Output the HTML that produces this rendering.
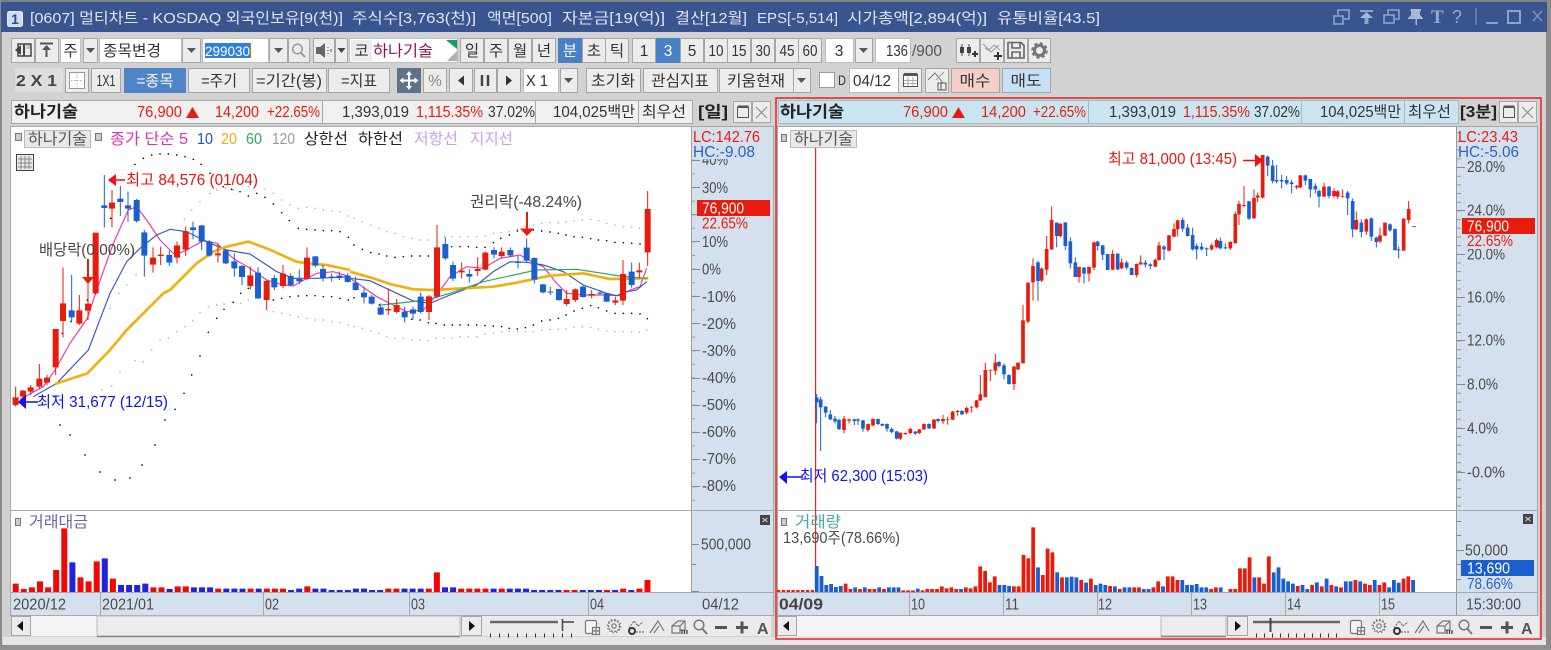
<!DOCTYPE html>
<html lang="ko"><head><meta charset="utf-8"><title>멀티차트</title>
<style>
html,body{margin:0;padding:0;background:#d2d2d2;width:1551px;height:650px;overflow:hidden}
svg{display:block}
text{font-family:"Liberation Sans","Noto Sans CJK KR",sans-serif;font-size:15.5px;fill:#333;white-space:pre}
.c{text-anchor:middle}
.b{fill:#ececec;stroke:#a6a6a6}
.w{fill:#fff;stroke:#bdbdbd}
.r{fill:#e81c0c}
.u{fill:#2a62c8}
.k{fill:#4a4a4a}
.cap{fill:#dfe4f0;font-size:15px}
.hd{fill:#f0f0f0;stroke:#a8a8a8}
.hb{fill:#c9e5f2;stroke:#a8b8c0}
</style></head><body>
<svg width="1551" height="650" viewBox="0 0 1551 650" xmlns="http://www.w3.org/2000/svg">
<defs>
<g id="ic" fill="none" stroke="#777" stroke-width="1.2">
<rect x="585.5" y="620.5" width="11" height="13" rx="1.5" fill="#f4f4f4"/><rect x="592.5" y="627.5" width="7" height="7" fill="#f4f4f4"/><path d="M592.5 631H599.5M596 627.5V634.5"/>
<circle cx="614" cy="626" r="5.5" stroke-dasharray="2 1.2"/><circle cx="614" cy="626" r="6.7" stroke-dasharray="1.5 2"/><circle cx="614" cy="626" r="2.2"/>
<path d="M629 628L634 621L638 626L643 622" stroke-dasharray="2 1"/><circle cx="632" cy="631" r="3" stroke="#333" stroke-width="2"/><path d="M636 632H644" stroke-dasharray="2 1"/>
<path d="M650 633L658 621L664 631M654 633L659 626"/>
<path d="M672 626L678 621H685V630H680M672 626H680V633H672ZM680 626L685 621"/><path d="M682 634V630M684.5 634V630M687 634V630" stroke="#333"/>
<circle cx="699" cy="625" r="4.8" stroke-width="1.5"/><path d="M702.5 629L707 634" stroke-width="2"/>
<path d="M715 627.5H727" stroke-width="3" stroke="#555"/><path d="M736 627.5H748M742 621.5V633.5" stroke-width="3" stroke="#555"/>
</g>
</defs>
<!-- window -->
<rect width="1551" height="650" fill="#d2d2d2"/>
<rect x="0" y="0" width="1551" height="2" fill="#808080"/>
<rect x="0" y="0" width="2" height="650" fill="#8a8a8a"/>
<rect x="1546" y="0" width="5" height="650" fill="#8a8a8a"/>
<rect x="1" y="2" width="1546" height="30" fill="#385590"/>
<rect x="0" y="645" width="1551" height="5" fill="#909090"/>
<rect x="3" y="637" width="1543" height="8" fill="#e6e6e6"/>
<rect x="7.5" y="11.5" width="15" height="15" rx="2" fill="#cfdcf0" stroke="#e8eef8"/>
<text x="15" y="24" class="c" style="fill:#2f4c88;font-weight:bold;font-size:14px">1</text>
<text x="30" y="23" class="cap" textLength="313" lengthAdjust="spacingAndGlyphs">[0607] 멀티차트 - KOSDAQ 외국인보유[9(천)]</text>
<text x="352" y="23" class="cap" textLength="124" lengthAdjust="spacingAndGlyphs">주식수[3,763(천)]</text>
<text x="487" y="23" class="cap" textLength="65" lengthAdjust="spacingAndGlyphs">액면[500]</text>
<text x="562" y="23" class="cap" textLength="103" lengthAdjust="spacingAndGlyphs">자본금[19(억)]</text>
<text x="675" y="23" class="cap" textLength="72" lengthAdjust="spacingAndGlyphs">결산[12월]</text>
<text x="757" y="23" class="cap" textLength="81" lengthAdjust="spacingAndGlyphs">EPS[-5,514]</text>
<text x="847" y="23" class="cap" textLength="140" lengthAdjust="spacingAndGlyphs">시가총액[2,894(억)]</text>
<text x="997" y="23" class="cap" textLength="103" lengthAdjust="spacingAndGlyphs">유통비율[43.5]</text>
<!-- title icons -->
<g fill="none" stroke="#8fa3c8" stroke-width="1.6">
<rect x="1334" y="16" width="9" height="8"/><path d="M1338 15V10H1349V19H1344"/>
<path d="M1360 11H1373" stroke-width="2"/><path d="M1366.5 24V16" stroke-width="4"/>
<rect x="1384" y="15" width="10" height="8"/><path d="M1388 14V10H1399V19H1395"/>
<path d="M1486 23H1498" stroke-width="2"/><rect x="1508" y="11" width="12" height="12" stroke-width="2"/><path d="M1533 11L1542 21M1542 11L1533 21" stroke="#7a8eb6"/>
<path d="M1476 8V25" stroke-width="1"/>
</g>
<path d="M1360 18L1366.5 12L1373 18Z" fill="#a8b8d6"/>
<path d="M1411 9H1421V11H1420V15L1423 18V19H1417V25H1415.5V19H1408V18L1411 15V11H1410Z" fill="#a8b8d6"/>
<text x="1431" y="23" style="font-family:'Liberation Serif',serif;font-size:19px;font-weight:bold;fill:#98aace">T</text>
<text x="1452" y="23" style="font-size:18px;fill:#98aace">?</text>

<!-- toolbar row1 -->
<rect class="b" x="11.5" y="38.5" width="23" height="24"/>
<path d="M18 44H31V56H18Z" fill="none" stroke="#444" stroke-width="1.5"/><path d="M24 44V56" stroke="#444" stroke-width="2"/><path d="M15 50L21 45V55Z" fill="#444"/><path d="M26 46H30M26 48H30" stroke="#999"/>
<rect class="b" x="35.5" y="38.5" width="23" height="24"/>
<path d="M40 43.5H53M46.5 57V48" stroke="#555" stroke-width="2"/><path d="M42 50L46.5 45L51 50Z" fill="#555"/>
<rect class="w" x="60.5" y="38.5" width="20" height="24"/><text x="70.5" y="56" class="c">주</text>
<rect class="b" x="83.5" y="38.5" width="14" height="24"/><path d="M86 48H95L90.5 53Z" fill="#555"/>
<rect class="w" x="99.5" y="38.5" width="82" height="24"/><text x="103" y="56" textLength="58" lengthAdjust="spacingAndGlyphs">종목변경</text>
<rect class="b" x="182.5" y="38.5" width="18" height="24"/><path d="M187 48H196L191.5 53Z" fill="#555"/>
<rect class="w" x="202.5" y="38.5" width="66" height="24"/><rect x="205" y="43" width="45" height="15" fill="#2f80d8"/>
<text x="205" y="56" textLength="45" lengthAdjust="spacingAndGlyphs" style="fill:#fff;font-size:14px">299030</text><path d="M250.5 43V58" stroke="#e06a10"/>
<rect class="b" x="269.5" y="38.5" width="18" height="24"/><path d="M274 48H283L278.5 53Z" fill="#555"/>
<rect class="b" x="288.5" y="38.5" width="21" height="24"/><circle cx="297.5" cy="49" r="4.8" fill="none" stroke="#999" stroke-width="1.5"/><path d="M301 53L305 57" stroke="#999" stroke-width="2"/>
<rect class="b" x="313.5" y="38.5" width="21" height="24"/><path d="M316 47H320L325 43V58L320 54H316Z" fill="#666"/><path d="M328 47V48M328 50V51M328 53V54M331 49V52" stroke="#888" stroke-width="1.5"/>
<rect class="b" x="335.5" y="38.5" width="12" height="24"/><path d="M337.5 48H345.5L341.5 53Z" fill="#444"/>
<rect class="w" x="349.5" y="38.5" width="108" height="24"/><rect x="351" y="40" width="21" height="21" fill="#ececec"/>
<text x="361.5" y="56" class="c">코</text>
<text x="373" y="56" textLength="60" lengthAdjust="spacingAndGlyphs" style="fill:#8e1458">하나기술</text>
<path d="M446 40H457V49Z" fill="#12a060"/><path d="M457 51V61H447Z" fill="#b0b0b0"/>
<rect class="b" x="460.5" y="38.5" width="23" height="24"/><text x="472" y="56" class="c">일</text>
<rect class="b" x="484.5" y="38.5" width="23" height="24"/><text x="496" y="56" class="c">주</text>
<rect class="b" x="508.5" y="38.5" width="23" height="24"/><text x="520" y="56" class="c">월</text>
<rect class="b" x="532.5" y="38.5" width="23" height="24"/><text x="544" y="56" class="c">년</text>
<rect x="558" y="38" width="24" height="25" fill="#4a80c4"/><text x="570" y="56" class="c" style="fill:#fff">분</text>
<rect class="b" x="582.5" y="38.5" width="23" height="24"/><text x="594" y="56" class="c">초</text>
<rect class="b" x="605.5" y="38.5" width="23" height="24"/><text x="617" y="56" class="c">틱</text>
<rect class="b" x="632.5" y="38.5" width="23" height="24"/><text x="644" y="56" class="c">1</text>
<rect x="656" y="38" width="24" height="25" fill="#4a80c4"/><text x="668" y="56" class="c" style="fill:#fff">3</text>
<rect class="b" x="680.5" y="38.5" width="23" height="24"/><text x="692" y="56" class="c">5</text>
<rect class="b" x="704.5" y="38.5" width="23" height="24"/><text x="716" y="56" class="c" textLength="15" lengthAdjust="spacingAndGlyphs">10</text>
<rect class="b" x="727.5" y="38.5" width="23" height="24"/><text x="739" y="56" class="c" textLength="15" lengthAdjust="spacingAndGlyphs">15</text>
<rect class="b" x="751.5" y="38.5" width="23" height="24"/><text x="763" y="56" class="c" textLength="15" lengthAdjust="spacingAndGlyphs">30</text>
<rect class="b" x="775.5" y="38.5" width="23" height="24"/><text x="787" y="56" class="c" textLength="15" lengthAdjust="spacingAndGlyphs">45</text>
<rect class="b" x="798.5" y="38.5" width="23" height="24"/><text x="810" y="56" class="c" textLength="15" lengthAdjust="spacingAndGlyphs">60</text>
<rect class="w" x="825.5" y="38.5" width="28" height="24"/><text x="839" y="56" class="c">3</text>
<rect class="b" x="855.5" y="38.5" width="17" height="24"/><path d="M859 48H868L863.5 53Z" fill="#555"/>
<rect class="w" x="875.5" y="38.5" width="35" height="24"/><text x="886" y="56" textLength="22" lengthAdjust="spacingAndGlyphs">136</text>
<text x="912" y="56" textLength="30" lengthAdjust="spacingAndGlyphs" style="fill:#555">/900</text>
<rect class="b" x="956.5" y="38.5" width="23" height="24"/><path d="M962 44V56M969 44V56" stroke="#444"/><path d="M962 47V53M969 47V53" stroke="#444" stroke-width="4"/><path d="M972 54H978M975 51V57" stroke="#333" stroke-width="2"/>
<rect class="b" x="980.5" y="38.5" width="23" height="24"/><path d="M983 44L989 50L994 45L1000 50M985 48L991 52L999 45" stroke="#999" fill="none"/><path d="M994 56H1002M998 52V60" stroke="#333" stroke-width="2"/>
<rect class="b" x="1004.5" y="38.5" width="23" height="24"/><path d="M1008 42.5H1021L1024 45.5V58H1008ZM1012 43V48H1020V43M1012 58V52H1020V58" fill="none" stroke="#666" stroke-width="1.6"/>
<rect class="b" x="1028.5" y="38.5" width="22" height="24"/><circle cx="1039.5" cy="50.5" r="5" fill="none" stroke="#777" stroke-width="3"/><circle cx="1039.5" cy="50.5" r="7" fill="none" stroke="#777" stroke-width="2.5" stroke-dasharray="3 2.5"/>

<!-- toolbar row2 -->
<rect x="15" y="68" width="48" height="24" fill="#dedede"/>
<text x="16" y="86" textLength="41" lengthAdjust="spacingAndGlyphs" style="font-weight:bold;fill:#444">2 X 1</text>
<rect class="b" x="65.5" y="68.5" width="23" height="24"/><rect x="69.5" y="72.5" width="15" height="16" fill="#fff" stroke="#999"/><path d="M77 74V87M71 80.5H83" stroke="#aaa" stroke-dasharray="1.5 1.5"/>
<rect class="b" x="91.5" y="68.5" width="29" height="24"/><text x="106" y="86" class="c" textLength="19" lengthAdjust="spacingAndGlyphs">1X1</text>
<rect x="124" y="68" width="62" height="25" fill="#4f84c6"/><text x="155" y="86" class="c" textLength="37" lengthAdjust="spacingAndGlyphs" style="fill:#fff">=종목</text>
<rect class="b" x="188.5" y="68.5" width="61" height="24"/><text x="219" y="86" class="c" textLength="36" lengthAdjust="spacingAndGlyphs">=주기</text>
<rect class="b" x="252.5" y="68.5" width="74" height="24"/><text x="289" y="86" class="c" textLength="66" lengthAdjust="spacingAndGlyphs">=기간(봉)</text>
<rect class="b" x="328.5" y="68.5" width="61" height="24"/><text x="359" y="86" class="c" textLength="36" lengthAdjust="spacingAndGlyphs">=지표</text>
<rect x="397" y="68" width="24" height="25" fill="#5f7287"/><path d="M401 80.5H417M409 72.5V88.5" stroke="#fff" stroke-width="2"/><path d="M409 71L406 75H412ZM409 90L406 86H412ZM399.5 80.5L403.5 77.5V83.5ZM418.5 80.5L414.5 77.5V83.5Z" fill="#fff"/>
<rect class="b" x="423.5" y="68.5" width="23" height="24"/><text x="435" y="86" class="c" style="fill:#888">%</text>
<rect class="b" x="449.5" y="68.5" width="23" height="24"/><path d="M464 75.5V85.5L458 80.5Z" fill="#333"/>
<rect class="b" x="474.5" y="68.5" width="22" height="24"/><path d="M482 75V86M488 75V86" stroke="#444" stroke-width="2.5"/>
<rect class="b" x="497.5" y="68.5" width="23" height="24"/><path d="M506 75.5V85.5L512 80.5Z" fill="#333"/>
<rect class="w" x="523.5" y="68.5" width="35" height="24"/><text x="526" y="86" textLength="22" lengthAdjust="spacingAndGlyphs">X 1</text>
<rect class="b" x="560.5" y="68.5" width="17" height="24"/><path d="M564 78H573L568.5 83Z" fill="#555"/>
<rect class="b" x="586.5" y="68.5" width="54" height="24"/><text x="613" y="86" class="c" textLength="44" lengthAdjust="spacingAndGlyphs">초기화</text>
<rect class="b" x="643.5" y="68.5" width="74" height="24"/><text x="680" y="86" class="c" textLength="58" lengthAdjust="spacingAndGlyphs">관심지표</text>
<rect class="b" x="719.5" y="68.5" width="74" height="24"/><text x="756" y="86" class="c" textLength="58" lengthAdjust="spacingAndGlyphs">키움현재</text>
<rect class="b" x="793.5" y="68.5" width="17" height="24"/><path d="M797 78H806L801.5 83Z" fill="#555"/>
<rect x="819.5" y="72.5" width="15" height="15" fill="#fff" stroke="#999"/>
<text x="838" y="85" textLength="8" lengthAdjust="spacingAndGlyphs" style="font-size:14px">D</text>
<rect class="w" x="849.5" y="68.5" width="49" height="24"/><text x="853" y="86" textLength="38" lengthAdjust="spacingAndGlyphs">04/12</text>
<rect class="b" x="898.5" y="68.5" width="23" height="24"/><rect x="903.5" y="74.5" width="14" height="12" fill="#fff" stroke="#555"/><path d="M904 74.5H917" stroke="#555" stroke-width="3"/><path d="M904 80.5H917M904 83.5H917M908 77V86M913 77V86" stroke="#aaa"/>
<rect class="b" x="925.5" y="68.5" width="23" height="24"/><path d="M928 80L935 73L943 83" stroke="#777" fill="none"/><path d="M936 80L944 72" stroke="#999"/><path d="M938 83H946V90H938ZM941 83V90" stroke="#555" fill="none"/>
<rect x="951.5" y="68.5" width="48" height="24" fill="#f6cfc8" stroke="#a6a6a6"/><text x="975" y="86" class="c" textLength="31" lengthAdjust="spacingAndGlyphs">매수</text>
<rect x="1002.5" y="68.5" width="48" height="24" fill="#c8e0f6" stroke="#a6a6a6"/><text x="1026" y="86" class="c" textLength="31" lengthAdjust="spacingAndGlyphs">매도</text>

<!-- left header -->
<rect class="hd" x="11.5" y="100.5" width="311" height="23"/>
<rect class="hd" x="322.5" y="100.5" width="213" height="23"/>
<rect class="hd" x="535.5" y="100.5" width="103" height="23"/>
<rect class="hd" x="638.5" y="100.5" width="54" height="23"/>
<text x="14" y="117" textLength="64" lengthAdjust="spacingAndGlyphs" style="font-weight:bold;font-size:16px;fill:#222">하나기술</text>
<text x="137" y="117" textLength="45" lengthAdjust="spacingAndGlyphs" class="r">76,900</text><path d="M186 118L192.5 107L199 118Z" fill="#e81c0c"/>
<text x="215" y="117" textLength="44" lengthAdjust="spacingAndGlyphs" class="r">14,200</text><text x="267" y="117" textLength="53" lengthAdjust="spacingAndGlyphs" class="r">+22.65%</text>
<text x="342" y="117" textLength="67" lengthAdjust="spacingAndGlyphs">1,393,019</text><text x="416" y="117" textLength="67" lengthAdjust="spacingAndGlyphs" class="r">1,115.35%</text><text x="488" y="117" textLength="47" lengthAdjust="spacingAndGlyphs">37.02%</text>
<text x="553" y="117" textLength="82" lengthAdjust="spacingAndGlyphs">104,025백만</text><text x="642" y="117" textLength="44" lengthAdjust="spacingAndGlyphs">최우선</text>
<text x="698" y="117" textLength="30" lengthAdjust="spacingAndGlyphs" style="font-weight:bold;fill:#222">[일]</text>
<rect class="b" x="733.5" y="101.5" width="18" height="21"/><rect x="737.5" y="107.5" width="11" height="10" fill="none" stroke="#555"/><path d="M737.5 106.5H748.5" stroke="#555" stroke-width="2"/>
<rect class="b" x="752.5" y="101.5" width="18" height="21"/><path d="M756 107L767 118M767 107L756 118" stroke="#888"/>

<!-- left chart -->
<rect x="10.5" y="126.5" width="763" height="489" fill="#fff" stroke="#a8a8a8"/>
<rect x="692" y="127" width="81" height="488" fill="#d5e0ee"/>
<path d="M691.5 127V615" stroke="#a0a0a0"/>
<rect x="11" y="593" width="681" height="22" fill="#d5e0ee"/>
<path d="M11 510.5H773M11 592.5H773M100.5 593V615M263.5 593V615M409.5 593V615M588.5 593V615" stroke="#a8a8a8"/>
<path d="M693.5 132.6V508" stroke="#999" stroke-width="3" stroke-dasharray="1 12.6" fill="none"/>
<path d="M692 160.5H700M692 187.5H700M692 214.5H700M692 241.5H700M692 269.5H700M692 296.5H700M692 323.5H700M692 350.5H700M692 378.5H700M692 405.5H700M692 432.5H700M692 459.5H700M692 486.5H700" stroke="#888"/>
<text x="702" y="165" textLength="26" lengthAdjust="spacingAndGlyphs" class="k">40%</text><text x="702" y="193" textLength="26" lengthAdjust="spacingAndGlyphs" class="k">30%</text><text x="702" y="247" textLength="26" lengthAdjust="spacingAndGlyphs" class="k">10%</text><text x="702" y="274.5" textLength="19" lengthAdjust="spacingAndGlyphs" class="k">0%</text>
<text x="702" y="302" textLength="34" lengthAdjust="spacingAndGlyphs" class="k">-10%</text><text x="702" y="329" textLength="34" lengthAdjust="spacingAndGlyphs" class="k">-20%</text><text x="702" y="356" textLength="34" lengthAdjust="spacingAndGlyphs" class="k">-30%</text><text x="702" y="383" textLength="34" lengthAdjust="spacingAndGlyphs" class="k">-40%</text><text x="702" y="410" textLength="34" lengthAdjust="spacingAndGlyphs" class="k">-50%</text><text x="702" y="437" textLength="34" lengthAdjust="spacingAndGlyphs" class="k">-60%</text><text x="702" y="464" textLength="34" lengthAdjust="spacingAndGlyphs" class="k">-70%</text><text x="702" y="491" textLength="34" lengthAdjust="spacingAndGlyphs" class="k">-80%</text>
<rect x="692" y="128" width="80" height="31" fill="#d5e0ee"/>
<path d="M692 160.5H700" stroke="#888"/>
<text x="693" y="142" textLength="67" lengthAdjust="spacingAndGlyphs" class="r">LC:142.76</text><text x="693" y="157" textLength="62" lengthAdjust="spacingAndGlyphs" class="u">HC:-9.08</text>
<rect x="700" y="216" width="70" height="16" fill="#d5e0ee"/>
<text x="702" y="228.5" textLength="46" lengthAdjust="spacingAndGlyphs" class="r">22.65%</text>
<rect x="697" y="200" width="73" height="16" fill="#e81c0c"/><text x="702" y="213.5" textLength="42" lengthAdjust="spacingAndGlyphs" style="fill:#fff">76,900</text>

<rect x="15.5" y="133.5" width="6" height="7" fill="#ccc" stroke="#777"/>
<rect x="24.5" y="130.5" width="66" height="17" fill="#e8e8e8" stroke="#bbb"/><text x="28" y="144" textLength="59" lengthAdjust="spacingAndGlyphs" style="fill:#555">하나기술</text>
<rect x="95.5" y="133.5" width="6" height="7" fill="#ccc" stroke="#777"/>
<text x="110" y="144" textLength="78" lengthAdjust="spacingAndGlyphs" style="fill:#e030b0">종가 단순 5</text>
<text x="197" y="144" textLength="16" lengthAdjust="spacingAndGlyphs" style="fill:#2050c0">10</text><text x="221" y="144" textLength="16" lengthAdjust="spacingAndGlyphs" style="fill:#f0a818">20</text><text x="246" y="144" textLength="16" lengthAdjust="spacingAndGlyphs" style="fill:#30a860">60</text><text x="272" y="144" textLength="23" lengthAdjust="spacingAndGlyphs" style="fill:#999">120</text>
<text x="304" y="144" textLength="44" lengthAdjust="spacingAndGlyphs" style="fill:#222">상한선</text><text x="358" y="144" textLength="45" lengthAdjust="spacingAndGlyphs" style="fill:#222">하한선</text><text x="414" y="144" textLength="44" lengthAdjust="spacingAndGlyphs" style="fill:#c8a0f0">저항선</text><text x="470" y="144" textLength="43" lengthAdjust="spacingAndGlyphs" style="fill:#c8a0f0">지지선</text>
<rect x="16.5" y="154.5" width="17" height="16" fill="#e8e8e8" stroke="#444"/><path d="M18 159H32M18 163H32M18 167H32M21 156V169M25 156V169M29 156V169" stroke="#888"/>

<!-- left chart lines and candles -->
<g transform="translate(0,130) scale(.33333)" fill="none">
<path stroke="#c8a0f0" stroke-width="5" stroke-linecap="round" d="M305 780h.1M335 768h.1M360 725h.1M405 692h.1M430 695h.1M455 660h.1M480 630h.1M505 625h.1M530 605h.1M555 590h.1M578 572h.1M600 548h.1M625 530h.1M650 525h.1M672 522h.1M697 517h.1M722 520h.1M745 510h.1M820 545h.1M845 550h.1M870 555h.1M895 560h.1M920 565h.1M945 570h.1M970 570h.1M995 575h.1M1020 578h.1M1045 585h.1M330 535h.1M357 490h.1M380 465h.1M408 435h.1M553 268h.1M575 240h.1M600 215h.1M630 190h.1M650 180h.1M675 175h.1M700 180h.1M745 170h.1M795 178h.1M820 190h.1M845 210h.1M870 225h.1M895 235h.1M920 232h.1M945 235h.1M970 240h.1M995 243h.1M1020 245h.1M1045 258h.1"/>
<path stroke="#111" stroke-width="5" stroke-linecap="round" d="M405 103h.1M430 85h.1M455 75h.1M480 72h.1M505 72h.1M530 75h.1M555 80h.1M580 88h.1M603 103h.1M630 130h.1M650 160h.1M670 170h.1M695 178h.1M720 185h.1M745 198h.1M770 190h.1M795 202h.1M820 222h.1M845 248h.1M868 272h.1M895 295h.1M920 298h.1M945 300h.1M970 302h.1M995 302h.1M1020 305h.1M1045 322h.1M180 885h.1M210 915h.1M255 975h.1M300 1026h.1M345 1050h.1M390 1044h.1M426 1005h.1M465 945h.1M495 870h.1M525 838h.1M552 790h.1M575 735h.1M600 678h.1M625 607h.1M650 565h.1M672 538h.1M700 517h.1M722 490h.1M745 475h.1M770 465h.1M820 510h.1M845 505h.1M870 500h.1M895 498h.1M920 497h.1M945 497h.1M970 500h.1M995 500h.1M1020 505h.1M1045 510h.1M332 265h.1M262 510h.1M213 575h.1M187 610h.1M162 800h.1"/>
<path stroke="#e83ab0" stroke-width="3.5" d="M60 808L130 770L165 720L210 640L262 565L290 480L340 340L385 240L410 230L440 270L480 330L525 375L560 360L610 332L650 340L700 385L750 415L800 450L850 465L880 468L920 445L950 430L1000 425L1050 440"/>
<path stroke="#3a55c0" stroke-width="3.5" d="M100 800L170 760L265 660L330 490L380 395L420 355L470 315L510 298L560 305L620 335L680 360L750 372L800 405L830 425L880 445L950 445L1050 440"/>
<path stroke="#f0b010" stroke-width="8" d="M165 762L262 730L330 660L380 600L490 490L510 480L590 400L640 365L680 350L745 335L800 355L890 395L920 400L980 405L1050 420"/>
<path stroke="#e81c0c" stroke-width="3" d="M47 770V830M69 780V815M92 765V795M118 702V775M141 735V765M167 597V735M189 413V622M238 495V585M264 387V570M287 308V495M336 180V292M459 352V428M482 350V405M531 335V400M557 290V378M654 340V397M751 410V478M800 450V540M849 405V475M921 352V450"/>
<path stroke="#e81c0c" stroke-width="18" d="M47 802V825M69 782V800M92 772V785M118 746V770M141 743V758M167 597V712M189 520V573M238 541V581M264 521V542M287 308V490M336 218V236M459 383V404M482 374V378M531 346V383M557 304V359M654 370V376M751 436V468M800 453V510M849 431V468M921 383V446"/>
<path stroke="#1a5fd0" stroke-width="3" d="M215 435V575M313 135V292M361 168V258M384 185V275M410 207V278M433 300V440M508 362V408M579 275V328M605 285V360M628 330V380M677 360V402M703 370V440M726 405V465M774 412V507M823 435V480M872 430V468M898 418V462M946 378V412M969 405V455M995 430V455M1018 425V450M1043 430V458"/>
<path stroke="#1a5fd0" stroke-width="18" d="M215 541V562M313 226V234M361 206V216M384 226V236M410 210V273M433 307V377M508 375V398M579 292V300M605 286V335M628 334V377M677 362V400M703 394V415M726 408V441M774 428V505M823 444V472M872 438V465M898 447V454M946 379V407M969 417V444M995 440V444M1018 437V444M1043 437V456"/>
</g>
<g transform="translate(350,130) scale(.33333)" fill="none">
<path stroke="#c8a0f0" stroke-width="5" stroke-linecap="round" d="M12 265h.1M37 275h.1M62 285h.1M87 295h.1M110 305h.1M135 310h.1M160 320h.1M185 325h.1M210 330h.1M235 330h.1M283 320h.1M307 320h.1M330 320h.1M355 320h.1M380 320h.1M405 318h.1M430 310h.1M453 308h.1M478 305h.1M502 298h.1M526 290h.1M550 285h.1M575 280h.1M600 278h.1M625 278h.1M648 275h.1M672 272h.1M697 270h.1M722 268h.1M745 272h.1M770 280h.1M795 285h.1M820 290h.1M845 292h.1M868 295h.1M12 590h.1M37 595h.1M62 603h.1M87 610h.1M110 620h.1M135 625h.1M160 625h.1M185 630h.1M210 630h.1M235 632h.1M258 625h.1M283 625h.1M307 625h.1M330 620h.1M355 620h.1M380 620h.1M405 612h.1M430 610h.1M455 605h.1M478 605h.1M502 605h.1M526 605h.1M550 605h.1M575 600h.1M600 598h.1M625 598h.1M648 597h.1M672 592h.1M697 590h.1M722 592h.1M745 598h.1M770 603h.1M795 605h.1M820 605h.1M845 605h.1M868 607h.1M890 600h.1"/>
<path stroke="#111" stroke-width="5" stroke-linecap="round" d="M12 345h.1M37 358h.1M62 368h.1M87 372h.1M110 378h.1M135 382h.1M160 380h.1M185 378h.1M210 378h.1M235 378h.1M305 350h.1M330 350h.1M355 350h.1M380 352h.1M405 352h.1M430 338h.1M452 325h.1M478 315h.1M502 303h.1M550 300h.1M575 303h.1M600 306h.1M625 310h.1M648 315h.1M672 320h.1M697 322h.1M722 326h.1M745 330h.1M770 332h.1M795 337h.1M820 338h.1M845 340h.1M870 342h.1M12 503h.1M62 510h.1M88 525h.1M185 568h.1M210 570h.1M235 578h.1M258 580h.1M283 585h.1M307 585h.1M330 585h.1M355 585h.1M380 585h.1M405 587h.1M430 588h.1M455 590h.1M478 595h.1M502 597h.1M526 593h.1M550 585h.1M575 573h.1M600 570h.1M625 565h.1M648 555h.1M672 543h.1M697 535h.1M722 527h.1M745 533h.1M770 543h.1M795 550h.1M820 550h.1M845 550h.1M870 552h.1M892 566h.1"/>
<path stroke="#e83ab0" stroke-width="3.5" d="M0 445L30 465L80 500L130 525L170 545L220 540L260 495L300 440L350 410L400 415L450 385L510 375L545 395L580 410L620 460L650 490L700 495L760 495L810 497L840 480L870 470L890 415"/>
<path stroke="#3a55c0" stroke-width="3.5" d="M0 445L60 452L130 485L190 513L240 520L300 495L380 465L430 425L480 395L530 397L580 405L640 425L700 465L770 490L800 497L830 485L860 480L890 455"/>
<path stroke="#f0b010" stroke-width="8" d="M0 425L70 445L120 462L190 478L250 480L340 475L430 470L500 458L600 437L700 430L780 447L895 445"/>
<path stroke="#30a860" stroke-width="3.5" d="M95 525L230 510L300 490L400 455L560 420L680 418L810 438L890 445"/>
<path stroke="#e81c0c" stroke-width="3" d="M115 475V555M140 507V550M237 495V570M261 285V505M335 397V445M383 382V438M406 365V420M455 352V386M650 480V528M676 475V516M725 480V505M796 500V525M819 390V525M868 398V445M893 183V408"/>
<path stroke="#e81c0c" stroke-width="18" d="M115 537V541M140 525V546M237 499V546M261 352V500M335 422V427M383 417V423M406 368V419M455 365V378M650 507V522M676 478V510M725 492V497M796 511V518M819 432V512M868 421V427M893 237V367"/>
<path stroke="#1a5fd0" stroke-width="3" d="M17 440V482M42 470V520M65 495V524M92 520V555M164 530V577M189 530V568M212 488V550M286 322V390M309 395V453M358 418V458M432 352V385M481 352V382M504 378V415M530 325V397M553 382V460M579 462V490M601 470V495M627 477V513M699 467V503M750 480V495M770 490V516M845 398V473"/>
<path stroke="#1a5fd0" stroke-width="18" d="M17 458V480M42 488V502M65 500V521M92 532V554M164 545V562M189 538V551M212 500V546M286 342V385M309 405V446M358 432V440M432 360V374M481 360V376M504 396V399M530 353V392M553 384V449M579 463V487M601 485V488M627 477V510M699 470V501M750 488V491M770 490V515M845 425V465"/>
</g>
<!-- left annotations -->
<path d="M114 180H125" stroke="#f01010" stroke-width="1.5"/><path d="M108 180L116 174V186Z" fill="#f01010"/>
<text x="126" y="185" textLength="132" lengthAdjust="spacingAndGlyphs" style="fill:#f01010">최고 84,576 (01/04)</text>
<path d="M88 259V278" stroke="#e81c0c" stroke-width="2"/><path d="M82 277H94L88 284Z" fill="#e81c0c"/>
<text x="39" y="255" textLength="96" lengthAdjust="spacingAndGlyphs" style="fill:#444">배당락(0.00%)</text>
<path d="M24 402H38" stroke="#1010f0" stroke-width="1.5"/><path d="M18 402L26 395V409Z" fill="#1010f0"/>
<text x="37" y="407" textLength="131" lengthAdjust="spacingAndGlyphs" style="fill:#1010f0">최저 31,677 (12/15)</text>
<text x="470" y="207" textLength="112" lengthAdjust="spacingAndGlyphs" style="fill:#444">권리락(-48.24%)</text>
<path d="M527 212V229" stroke="#e81c0c" stroke-width="2"/><path d="M520 228.5H534L527 236Z" fill="#e81c0c"/>

<!-- left volume -->
<rect x="15.5" y="518.5" width="5" height="7" fill="#ccc" stroke="#777"/>
<text x="29" y="527" textLength="59" lengthAdjust="spacingAndGlyphs" style="fill:#6666aa">거래대금</text>
<g transform="translate(0,505) scale(1,.33333)" fill="none" stroke-width="6">
<path stroke="#f00808" d="M15.7 261V236M23.8 261V252M31.9 261V247M40 261V229M48.1 261V247M56.2 261V195M64.3 261V70M80.5 261V217M88.6 261V229M96.7 261V169M112.9 261V221M153.4 261V247M161.5 261V247M177.7 261V244M185.8 261V244M218.2 261V251M250.6 261V251M266.8 261V251M274.9 261V251M283 261V251M307.3 261V244M388.3 261V251M396.4 261V251M428.8 261V251M436.9 261V202M461.2 261V251M469.3 261V251M477.4 261V251M485.5 261V251M501.7 261V251M566.5 261V255M574.6 261V255M607 261V255M623.2 261V251M639.4 261V251M647.5 261V225"/>
<path stroke="#2222dd" d="M72.4 261V172M104.8 261V160M121 261V240M129.1 261V240M137.2 261V240M145.3 261V236M169.6 261V252M193.9 261V247M202 261V247M210.1 261V247M226.3 261V251M234.4 261V251M242.5 261V251M258.7 261V251M291.1 261V255M299.2 261V251M315.4 261V251M323.5 261V251M331.6 261V255M339.7 261V255M347.8 261V255M355.9 261V251M364 261V251M372.1 261V255M380.2 261V255M404.5 261V251M412.6 261V251M420.7 261V251M445 261V247M453.1 261V247M493.6 261V251M509.8 261V251M517.9 261V251M526 261V251M534.1 261V255M542.2 261V255M550.3 261V255M558.4 261V255M582.7 261V255M590.8 261V255M598.9 261V255M615.1 261V255M631.3 261V255"/>
</g>
<path d="M692 544.5H699M692 564.5H696M692 591.5H699" stroke="#888"/>
<text x="701" y="549.5" textLength="50" lengthAdjust="spacingAndGlyphs" class="k">500,000</text>
<rect x="760" y="515" width="10" height="10" fill="#444"/><path d="M762.5 518L767.5 522M767.5 518L762.5 522" stroke="#ddd"/>
<text x="13" y="609.5" textLength="53" lengthAdjust="spacingAndGlyphs" class="k">2020/12</text><text x="102" y="609.5" textLength="52" lengthAdjust="spacingAndGlyphs" class="k">2021/01</text><text x="265" y="609.5" textLength="14" lengthAdjust="spacingAndGlyphs" class="k">02</text><text x="411" y="609.5" textLength="14" lengthAdjust="spacingAndGlyphs" class="k">03</text><text x="590" y="609.5" textLength="14" lengthAdjust="spacingAndGlyphs" class="k">04</text><text x="702" y="609.5" textLength="37" lengthAdjust="spacingAndGlyphs" class="k">04/12</text>

<!-- left scrollbar -->
<rect x="11" y="616" width="760" height="20" fill="#ebebeb"/>
<rect x="31" y="616" width="66" height="20" fill="#f4f4f4"/>
<rect class="b" x="11.5" y="616.5" width="19" height="19"/><path d="M23 621V631L17 626Z" fill="#111"/>
<rect x="97" y="616" width="363" height="20" fill="#ececec" stroke="#bbb"/><path d="M97 636.5H460" stroke="#888" stroke-width="1.5"/>
<rect class="b" x="461.5" y="616.5" width="20" height="19"/><path d="M469 621V631L475 626Z" fill="#111"/>
<path d="M490 622H558" stroke="#666" stroke-width="2.5"/><path d="M562.5 619V631M562.5 622H574" stroke="#444" stroke-width="1.5"/>
<path d="M490 635.5H574" stroke="#333" stroke-width="4" stroke-dasharray="1 8"/>
<use href="#ic"/>
<text x="757" y="634" style="font-weight:bold;font-size:16px;fill:#555">A</text>

<!-- right panel -->
<rect x="776" y="98" width="765" height="541" fill="none" stroke="#e82020" stroke-width="1.5"/>
<rect x="778" y="100" width="310" height="24" fill="#c9e5f2"/>
<rect class="hb" x="778.5" y="100.5" width="310" height="23"/><rect class="hb" x="1088.5" y="100.5" width="213" height="23"/><rect class="hb" x="1301.5" y="100.5" width="103" height="23"/><rect class="hb" x="1404.5" y="100.5" width="54" height="23"/>
<text x="780" y="117" textLength="64" lengthAdjust="spacingAndGlyphs" style="font-weight:bold;font-size:16px;fill:#222">하나기술</text>
<text x="903" y="117" textLength="45" lengthAdjust="spacingAndGlyphs" class="r">76,900</text><path d="M952 118L958.5 107L965 118Z" fill="#e81c0c"/>
<text x="981" y="117" textLength="45" lengthAdjust="spacingAndGlyphs" class="r">14,200</text><text x="1033" y="117" textLength="53" lengthAdjust="spacingAndGlyphs" class="r">+22.65%</text>
<text x="1109" y="117" textLength="67" lengthAdjust="spacingAndGlyphs">1,393,019</text><text x="1183" y="117" textLength="67" lengthAdjust="spacingAndGlyphs" class="r">1,115.35%</text><text x="1254" y="117" textLength="46" lengthAdjust="spacingAndGlyphs">37.02%</text>
<text x="1320" y="117" textLength="81" lengthAdjust="spacingAndGlyphs">104,025백만</text><text x="1408" y="117" textLength="43" lengthAdjust="spacingAndGlyphs">최우선</text>
<text x="1460" y="117" textLength="37" lengthAdjust="spacingAndGlyphs" style="font-weight:bold;fill:#222">[3분]</text>
<rect class="b" x="1499.5" y="101.5" width="18" height="21"/><rect x="1503.5" y="107.5" width="11" height="10" fill="none" stroke="#555"/><path d="M1503.5 106.5H1514.5" stroke="#555" stroke-width="2"/>
<rect class="b" x="1518.5" y="101.5" width="18" height="21"/><path d="M1522 107L1533 118M1533 107L1522 118" stroke="#888"/>

<rect x="777.5" y="126.5" width="760" height="489" fill="#fff" stroke="#a8a8a8"/>
<rect x="1457" y="127" width="80" height="488" fill="#d5e0ee"/>
<path d="M1456.5 127V615" stroke="#999"/>
<rect x="778" y="593" width="678" height="22" fill="#d5e0ee"/>
<path d="M778 510.5H1537M778 592.5H1537M909.5 593V615M1003.5 593V615M1097.5 593V615M1191.5 593V615M1285.5 593V615M1379.5 593V615" stroke="#a8a8a8"/>
<path d="M1459 132.3V510" stroke="#999" stroke-width="4" stroke-dasharray="1 7.68" fill="none"/>
<path d="M1457 167.5H1465M1457 210.5H1465M1457 254.5H1465M1457 297.5H1465M1457 340.5H1465M1457 384.5H1465M1457 428.5H1465M1457 472.5H1465" stroke="#888"/>
<text x="1467" y="172" textLength="38" lengthAdjust="spacingAndGlyphs" class="k">28.0%</text><text x="1467" y="215.5" textLength="38" lengthAdjust="spacingAndGlyphs" class="k">24.0%</text><text x="1467" y="259.5" textLength="38" lengthAdjust="spacingAndGlyphs" class="k">20.0%</text><text x="1467" y="302.5" textLength="38" lengthAdjust="spacingAndGlyphs" class="k">16.0%</text><text x="1467" y="345.5" textLength="38" lengthAdjust="spacingAndGlyphs" class="k">12.0%</text><text x="1467" y="389.5" textLength="31" lengthAdjust="spacingAndGlyphs" class="k">8.0%</text><text x="1467" y="433.5" textLength="31" lengthAdjust="spacingAndGlyphs" class="k">4.0%</text><text x="1467" y="477.5" textLength="38" lengthAdjust="spacingAndGlyphs" class="k">-0.0%</text>
<text x="1458" y="142" textLength="60" lengthAdjust="spacingAndGlyphs" class="r">LC:23.43</text><text x="1458" y="157" textLength="61" lengthAdjust="spacingAndGlyphs" class="u">HC:-5.06</text>
<rect x="1465" y="234" width="70" height="15" fill="#d5e0ee"/>
<text x="1467" y="246" textLength="46" lengthAdjust="spacingAndGlyphs" class="r">22.65%</text>
<rect x="1462" y="218" width="73" height="16" fill="#e81c0c"/><text x="1467" y="231.5" textLength="42" lengthAdjust="spacingAndGlyphs" style="fill:#fff">76,900</text>

<rect x="781.5" y="134.5" width="5" height="7" fill="#ccc" stroke="#777"/>
<rect x="790.5" y="130.5" width="66" height="17" fill="#e8e8e8" stroke="#bbb"/><text x="794" y="144" textLength="59" lengthAdjust="spacingAndGlyphs" style="fill:#555">하나기술</text>
<rect x="815" y="148" width="1.2" height="444" fill="#f02020"/>

<g transform="translate(775,130) scale(.33333)" fill="none">
<path stroke="#e81c0c" stroke-width="3" d="M207 858V910M222 866V880M279 880V905M294 865V890M376 908V930M391 908V915M406 893V912M433 897V912M447 880V900M477 867V897M504 855V882M518 860V884M533 843V870M548 840V857M575 830V853M590 828V848M605 810V835M616 735V813M631 698V802M646 718V753M661 672V735M717 708V780M729 698V720M744 525V700M759 458V580M774 385V512M800 412V456M815 318V435M830 229V360M856 280V322M912 410V458M942 410V455M957 335V420M1013 360V420M1040 385V418"/>
<path stroke="#e81c0c" stroke-width="11" d="M207 866V900M222 868V872M279 882V900M294 867V886M376 908V926M391 909V912M406 897V909M433 898V909M447 882V898M477 869V895M504 867V874M518 868V870M533 845V869M548 843V846M575 834V848M590 831V833M605 811V832M616 793V811M631 720V801M646 720V722M661 698V722M717 710V762M729 698V718M744 571V700M759 458V575M774 408V457M800 416V452M815 357V419M830 270V358M856 281V318M912 411V441M942 411V431M957 337V413M1013 372V419M1040 397V415"/>
<path stroke="#1a5fd0" stroke-width="3" d="M125 792V880M137 800V963M152 828V862M166 840V870M180 858V880M192 866V900M238 866V885M249 865V885M264 870V905M309 866V885M322 880V888M336 880V905M350 893V910M365 903V928M421 903V915M462 880V897M489 865V878M561 840V855M672 693V712M687 700V748M702 733V764M789 392V513M845 277V352M871 277V360M886 322V415M901 382V440M927 411V460M968 333V362M983 345V390M998 372V420M1028 370V420"/>
<path stroke="#1a5fd0" stroke-width="11" d="M125 802V817M137 808V832M152 830V848M166 853V868M180 866V874M192 870V897M238 868V873M249 868V872M264 871V896M309 867V882M322 882V887M336 882V896M350 897V906M365 904V926M421 905V911M462 882V895M489 867V873M561 843V853M672 696V708M687 706V733M702 735V762M789 397V453M845 278V318M871 277V348M886 334V400M901 397V441M927 413V431M968 335V348M983 346V374M998 372V420M1028 371V418"/>
</g>
<g transform="translate(1125,130) scale(.33333)" fill="none">
<path stroke="#e81c0c" stroke-width="3" d="M35 400V442M47 376V405M91 385V412M102 335V392M132 315V364M147 280V322M158 270V320M260 340V362M275 325V355M316 334V360M331 245V340M342 213V285M357 168V232M387 178V266M398 188V216M413 75V205M515 165V178M526 135V175M597 158V200M627 175V203M638 180V207M653 178V203M694 245V300M724 265V315M765 293V340M780 278V318M836 265V362M851 213V280"/>
<path stroke="#e81c0c" stroke-width="11" d="M35 402V435M47 397V403M91 390V410M102 346V390M132 316V362M147 297V320M158 271V298M260 346V358M275 330V352M316 336V355M331 252V340M342 222V253M357 225V228M387 204V265M398 197V203M413 75V203M515 168V172M526 136V172M597 170V200M627 183V198M638 184V200M653 198V200M694 270V298M724 268V305M765 316V334M780 278V317M836 266V362M851 237V270"/>
<path stroke="#1a5fd0" stroke-width="3" d="M5 392V418M20 412V435M61 390V412M76 400V418M117 345V390M173 263V305M188 282V320M203 293V362M215 340V388M230 338V362M245 352V378M286 323V358M301 340V358M372 212V270M428 77V138M443 90V160M455 105V160M470 135V175M485 138V165M500 150V190M541 133V165M556 147V202M571 160V190M582 178V232M612 168V205M668 183V255M683 205V322M709 268V322M739 263V333M754 320V352M795 280V305M810 295V362M821 350V385"/>
<path stroke="#1a5fd0" stroke-width="11" d="M5 398V413M20 414V435M61 398V404M76 403V408M117 350V358M173 270V296M188 293V318M203 315V358M215 348V358M230 350V358M245 355V358M286 333V355M301 352V355M372 214V266M428 80V107M443 107V153M455 150V154M470 150V154M485 150V160M500 157V162M541 136V152M556 147V178M571 168V178M582 183V200M612 170V198M668 188V205M683 213V298M709 278V306M739 265V320M754 323V336M795 283V301M810 297V360M821 358V361"/>
<path stroke="#1a5fd0" stroke-width="3" d="M862 290H873"/>
</g>
<path d="M1243 160.5H1258" stroke="#f01010" stroke-width="1.5"/><path d="M1263 160.5L1255 154V167Z" fill="#f01010"/>
<text x="1108" y="164" textLength="129" lengthAdjust="spacingAndGlyphs" style="fill:#f01010">최고 81,000 (13:45)</text>
<path d="M786 477H803" stroke="#1010f0" stroke-width="1.5"/><path d="M779 477L787 471V484Z" fill="#1010f0"/>
<text x="800" y="481" textLength="128" lengthAdjust="spacingAndGlyphs" style="fill:#1010f0">최저 62,300 (15:03)</text>

<!-- right volume -->
<rect x="781.5" y="518.5" width="5" height="7" fill="#ccc" stroke="#777"/>
<text x="795" y="527" textLength="46" lengthAdjust="spacingAndGlyphs" style="fill:#44a8a8">거래량</text>
<text x="783" y="543" textLength="117" lengthAdjust="spacingAndGlyphs" class="k">13,690주(78.66%)</text>
<path d="M777 591H815" stroke="#e81c0c" stroke-width="2" stroke-dasharray="3.4 1.4"/>
<g transform="translate(0,505) scale(1,.33333)" fill="none" stroke-width="3.8">
<path stroke="#e81c0c" d="M845.6 261V236M850.4 261V252M860 261V252M869.6 261V252M874.4 261V252M884 261V252M903.3 261V256M908.1 261V256M912.9 261V256M922.5 261V256M927.3 261V252M932.1 261V252M937 261V252M941.8 261V244M946.6 261V250M951.4 261V247M956.2 261V252M965.8 261V247M970.6 261V250M975.4 261V244M980.2 261V184M985.1 261V198M989.9 261V232M994.7 261V214M1013.9 261V244M1018.7 261V244M1023.5 261V150M1028.3 261V160M1033.2 261V67M1042.8 261V210M1047.6 261V131M1052.4 261V142M1062 261V217M1081.3 261V225M1090.9 261V221M1110.1 261V243M1119.7 261V252M1134.2 261V247M1139 261V247M1153.4 261V247M1158.2 261V229M1167.8 261V214M1172.6 261V214M1177.5 261V225M1211.1 261V252M1215.9 261V247M1230.4 261V252M1235.2 261V252M1240 261V190M1244.8 261V190M1249.6 261V157M1259.2 261V217M1264 261V236M1268.8 261V154M1297.7 261V243M1312.1 261V240M1321.8 261V244M1331.4 261V240M1341 261V247M1355.4 261V225M1365 261V236M1369.9 261V240M1379.5 261V240M1384.3 261V232M1403.5 261V221M1408.3 261V214"/>
<path stroke="#1a5fd0" d="M816.7 261V183M821.5 261V213M826.3 261V240M831.1 261V237M835.9 261V246M840.8 261V243M855.2 261V247M864.8 261V247M879.2 261V247M888.9 261V247M893.7 261V247M898.5 261V247M917.7 261V251M961 261V252M999.5 261V240M1004.3 261V240M1009.1 261V243M1038 261V187M1057.2 261V202M1066.8 261V217M1071.6 261V215M1076.4 261V217M1086.1 261V233M1095.7 261V240M1100.5 261V236M1105.3 261V240M1114.9 261V244M1124.5 261V247M1129.4 261V247M1143.8 261V252M1148.6 261V252M1163 261V244M1182.3 261V225M1187.1 261V240M1191.9 261V240M1196.7 261V237M1201.5 261V247M1206.3 261V247M1220.7 261V247M1254.4 261V217M1273.7 261V202M1278.5 261V187M1283.3 261V221M1288.1 261V229M1292.9 261V236M1302.5 261V240M1307.3 261V252M1316.9 261V232M1326.6 261V221M1336.2 261V244M1345.8 261V229M1350.6 261V229M1360.2 261V229M1374.7 261V225M1389.1 261V247M1393.9 261V225M1398.7 261V233M1413.1 261V225"/>
</g>
<path d="M1457 550.5H1464M1457 521.5H1461M1457 535.5H1461M1457 564.5H1461M1457 579.5H1461" stroke="#888"/>
<text x="1465" y="555.5" textLength="43" lengthAdjust="spacingAndGlyphs" class="k">50,000</text>
<text x="1467" y="589" textLength="46" lengthAdjust="spacingAndGlyphs" class="u">78.66%</text>
<rect x="1461" y="560" width="73" height="16" fill="#1a5fd0"/><text x="1467" y="573.5" textLength="43" lengthAdjust="spacingAndGlyphs" style="fill:#fff">13,690</text>
<rect x="1523" y="514" width="10" height="10" fill="#444"/><path d="M1525.5 517L1530.5 521M1530.5 517L1525.5 521" stroke="#ddd"/>
<text x="779" y="609.5" textLength="44" lengthAdjust="spacingAndGlyphs" style="font-weight:bold;fill:#444">04/09</text><text x="911" y="609.5" textLength="14" lengthAdjust="spacingAndGlyphs" class="k">10</text><text x="1005" y="609.5" textLength="14" lengthAdjust="spacingAndGlyphs" class="k">11</text><text x="1098" y="609.5" textLength="14" lengthAdjust="spacingAndGlyphs" class="k">12</text><text x="1193" y="609.5" textLength="14" lengthAdjust="spacingAndGlyphs" class="k">13</text><text x="1287" y="609.5" textLength="14" lengthAdjust="spacingAndGlyphs" class="k">14</text><text x="1381" y="609.5" textLength="14" lengthAdjust="spacingAndGlyphs" class="k">15</text><text x="1466" y="609.5" textLength="55" lengthAdjust="spacingAndGlyphs" class="k">15:30:00</text>

<!-- right scrollbar -->
<rect x="778" y="616" width="761" height="21" fill="#ebebeb"/>
<rect x="797" y="616" width="364" height="20" fill="#f4f4f4"/>
<rect class="b" x="777.5" y="616.5" width="19" height="19"/><path d="M789 621V631L783 626Z" fill="#111"/>
<rect x="1161" y="616" width="65" height="20" fill="#ececec" stroke="#bbb"/><path d="M1161 636.5H1226" stroke="#888" stroke-width="1.5"/>
<rect class="b" x="1227.5" y="616.5" width="20" height="19"/><path d="M1235 621V631L1241 626Z" fill="#111"/>
<path d="M1253 622H1340" stroke="#666" stroke-width="2.5"/><path d="M1270.5 618V632" stroke="#444" stroke-width="2"/>
<path d="M1256 635.5H1340" stroke="#333" stroke-width="4" stroke-dasharray="1 7"/>
<use href="#ic" transform="translate(765,0)"/>
<text x="1521" y="634" style="font-weight:bold;font-size:16px;fill:#555">A</text>
</svg>
</body></html>
